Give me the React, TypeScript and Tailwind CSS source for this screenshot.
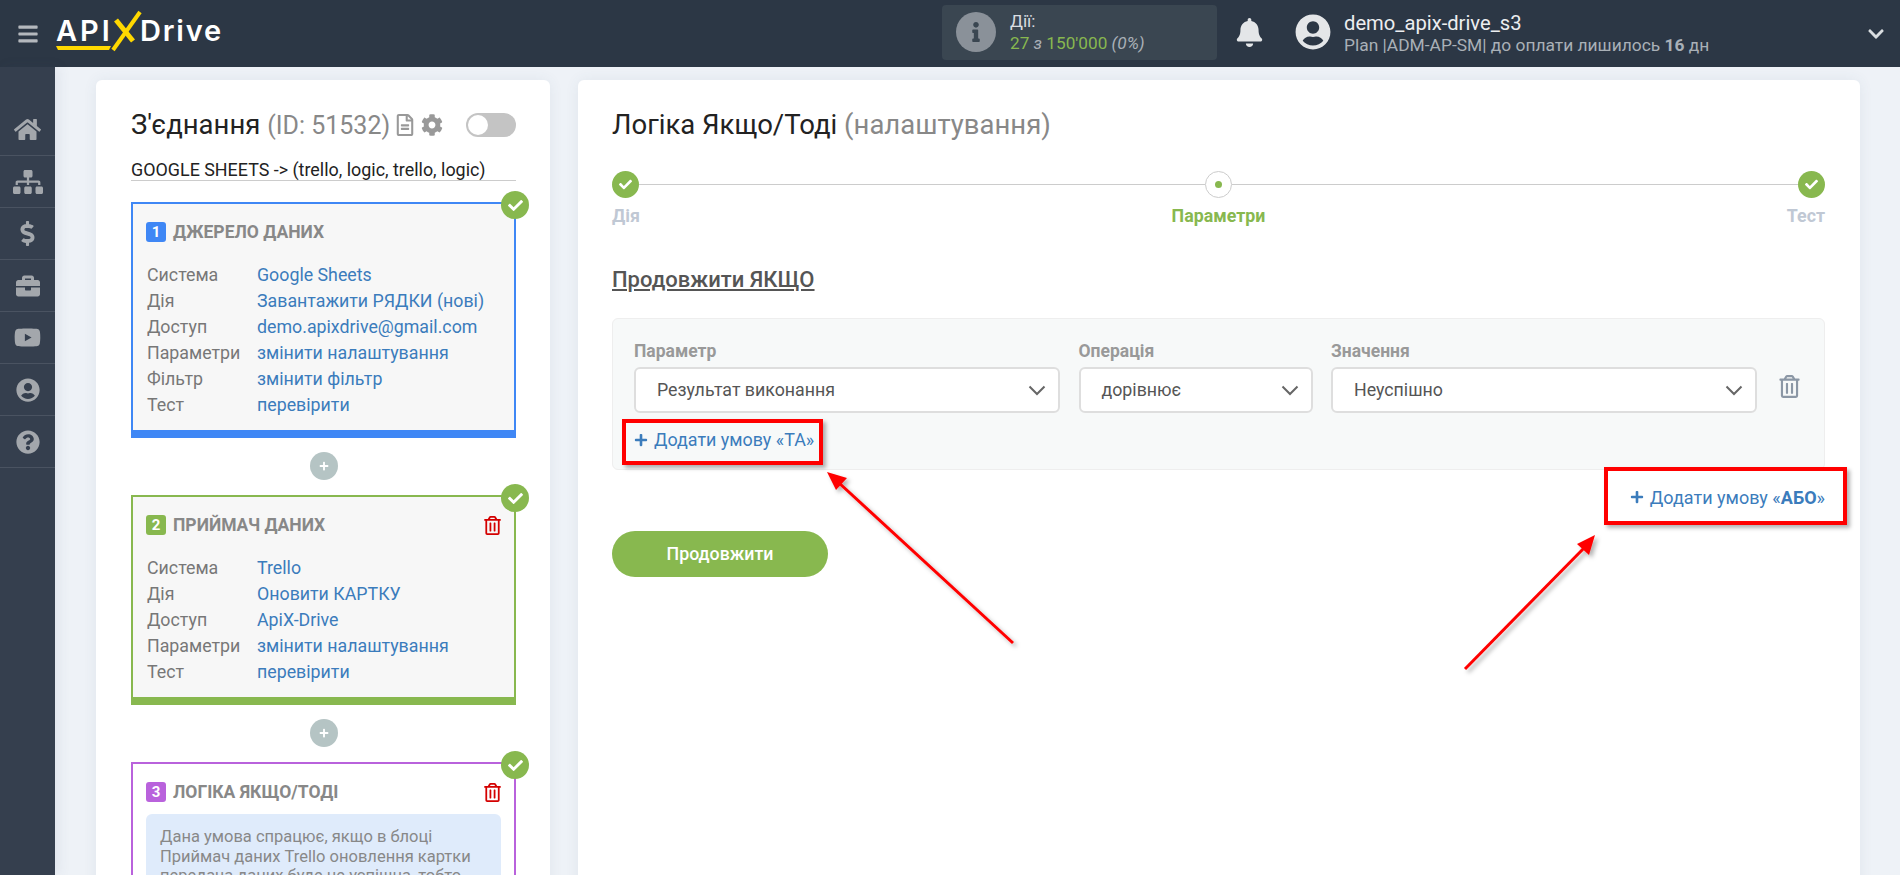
import {
  FaBars,
  FaBell,
  FaBriefcase,
  FaCheck,
  FaChevronDown,
  FaCog,
  FaDollarSign,
  FaHome,
  FaInfo,
  FaPlus,
  FaQuestionCircle,
  FaRegFileAlt,
  FaRegTrashAlt,
  FaSitemap,
  FaUserCircle,
  FaYoutube,
} from "react-icons/fa";

const navIcons = [
  { icon: FaHome, size: 27 },
  { icon: FaSitemap, size: 30 },
  { icon: FaDollarSign, size: 25 },
  { icon: FaBriefcase, size: 24 },
  { icon: FaYoutube, size: 27 },
  { icon: FaUserCircle, size: 24 },
  { icon: FaQuestionCircle, size: 24 },
];

function Check() {
  return (
    <span className="absolute right-[-15px] top-[-13px] flex h-[28px] w-[28px] items-center justify-center rounded-full bg-[#88b84f] text-white">
      <FaCheck size={15} />
    </span>
  );
}

function AddStep() {
  return (
    <div className="flex justify-center pb-[15px] pt-[14px]">
      <span className="flex h-[28px] w-[28px] items-center justify-center rounded-full bg-[#b5c4c4] text-white">
        <FaPlus size={10} />
      </span>
    </div>
  );
}

function Block({
  num,
  title,
  borderClass,
  badgeClass,
  rows,
  canDelete,
}: {
  num: number;
  title: string;
  borderClass: string;
  badgeClass: string;
  rows: [string, string][];
  canDelete?: boolean;
}) {
  return (
    <div className={`relative border-2 border-b-8 bg-[#f7f7f7] px-[13px] pb-[12px] pt-[18px] ${borderClass}`}>
      <Check />
      <BlockTitle num={num} title={title} badgeClass={badgeClass} canDelete={canDelete} />
      <div className="mt-[20px]">
        {rows.map(([label, value]) => (
          <div key={label} className="flex h-[26px] items-center text-[17.8px]">
            <span className="w-[111px] pl-px text-[#777]">{label}</span>
            <span className="text-[#3b7cbc]">{value}</span>
          </div>
        ))}
      </div>
    </div>
  );
}

function BlockTitle({
  num,
  title,
  badgeClass,
  canDelete,
}: {
  num: number;
  title: string;
  badgeClass: string;
  canDelete?: boolean;
}) {
  return (
    <div className="flex h-[20px] items-center">
      <span className={`flex h-[20px] w-[20px] items-center justify-center rounded-[3px] text-[15px] font-bold text-white ${badgeClass}`}>
        {num}
      </span>
      <span className="ml-[7px] text-[17.5px] font-bold text-[#888]">{title}</span>
      {canDelete && <FaRegTrashAlt size={19} className="ml-auto mr-[-1px] text-[#d40000]" />}
    </div>
  );
}

function StepCircle() {
  return (
    <span className="flex h-[27px] w-[27px] shrink-0 items-center justify-center rounded-full bg-[#88b84f] text-white">
      <FaCheck size={13} />
    </span>
  );
}

function SelectBox({ value }: { value: string }) {
  return (
    <div className="flex h-[46px] items-center justify-between rounded-[6px] border-2 border-[#dedede] bg-white pl-[21px] pr-[12px] text-[17.8px] font-normal text-[#555]">
      <span>{value}</span>
      <svg width="18" height="11" viewBox="0 0 18 11" fill="none" stroke="#666" strokeWidth="2">
        <path d="M1.5 1.5 9 9l7.5-7.5" />
      </svg>
    </div>
  );
}

function Arrow({ d, head }: { d: string; head: string }) {
  return (
    <svg className="absolute left-0 top-0" width="1900" height="875" fill="none">
      <defs>
        <filter id="arrowShadow" x="-20%" y="-20%" width="140%" height="140%">
          <feDropShadow dx="3" dy="3" stdDeviation="2" floodColor="#000" floodOpacity="0.3" />
        </filter>
      </defs>
      <g filter="url(#arrowShadow)">
        <path d={d} stroke="#ff0000" strokeWidth="3" />
        <path d={head} fill="#ff0000" />
      </g>
    </svg>
  );
}

export default function App() {
  return (
    <div className="relative flex h-screen flex-col overflow-hidden bg-[#eef2f7] font-['Roboto',sans-serif]">
      {/* Header */}
      <header className="flex h-[67px] shrink-0 items-center bg-[#2c3745]">
        <FaBars size={22} className="ml-[17px] text-[#b4b8bd]" />
        <div className="relative ml-[16px] h-[67px] w-[170px] font-['Inter',sans-serif] text-[29px] font-semibold leading-none text-white">
          <span className="absolute left-px top-[16px] tracking-[3px]">API</span>
          <span className="absolute left-[85px] top-[16px] tracking-[1.8px]">Drive</span>
          <svg className="absolute left-0 top-0" width="170" height="67" fill="none" stroke="#ffd800">
            <path d="M1 46h55l-2 4H3Z" fill="#ffd800" stroke="none" />
            <path d="M58 50 85 12" strokeWidth="4" />
            <path d="M61 20 78 41" strokeWidth="5" />
          </svg>
        </div>

        <div className="ml-[717px] mt-[-3px] flex h-[55px] w-[275px] items-center rounded-[4px] bg-[#3a4651]">
          <span className="ml-[14px] flex h-[40px] w-[40px] items-center justify-center rounded-full bg-[#8a9199] text-[#3a4651]">
            <FaInfo size={20} />
          </span>
          <div className="ml-[14px] text-[17.2px] leading-[22px]">
            <p className="text-[#d9dde0]">Дії:</p>
            <p className="text-[#88b84f]">
              27 <i className="text-[#a9b0b7]">з</i> 150'000 <i className="text-[#a9b0b7]">(0%)</i>
            </p>
          </div>
        </div>

        <FaBell size={29} className="ml-[18px] mt-[-3px] text-[#e4e6e8]" />
        <FaUserCircle size={36} className="ml-[31px] mt-[-3px] text-[#e4e6e8]" />
        <div className="ml-[13px]">
          <p className="text-[20.2px] leading-[23px] text-[#eceef0]">demo_apix-drive_s3</p>
          <p className="text-[17.4px] leading-[21px] text-[#a9b0b7]">
            Plan |ADM-AP-SM| до оплати лишилось <b>16</b> дн
          </p>
        </div>
        <FaChevronDown size={18} className="ml-auto mr-[15px] text-[#d9dde0]" />
      </header>

      <div className="flex min-h-0 flex-1">
        {/* Sidebar */}
        <nav className="w-[55px] shrink-0 bg-[#353f4e] pt-[37px] shadow-[4px_0_12px_rgba(60,80,110,0.08)]">
          {navIcons.map(({ icon: Icon, size }, i) => (
            <div key={i} className="flex h-[52px] items-center justify-center border-b border-[#4a5361] text-[#a3a7ac]">
              <Icon size={size} />
            </div>
          ))}
        </nav>

        {/* Content */}
        <main className="flex min-w-0 flex-1 items-start gap-[28px] pl-[41px] pt-[13px]">
          <section className="w-[454px] shrink-0 rounded-[6px] bg-white pl-[35px] pr-[34px] pt-[28px] shadow-[0_0_14px_rgba(70,90,120,0.08)]">
            <div className="flex h-[34px] items-center">
              <h1 className="text-[27.5px] text-[#222]">
                З'єднання <span className="text-[25px] text-[#888]">(ID: 51532)</span>
              </h1>
              <FaRegFileAlt size={22} className="ml-[4px] text-[#999]" />
              <FaCog size={22} className="ml-[5px] text-[#999]" />
              <span className="ml-auto flex h-[24px] w-[50px] items-center rounded-full bg-[#c4c4c4] pl-[2px]">
                <span className="h-[20px] w-[20px] rounded-full bg-white" />
              </span>
            </div>
            <p className="mt-[16px] h-[23px] border-b border-[#ccc] text-[17.9px] leading-[23px] text-[#222]">
              GOOGLE SHEETS -&gt; (trello, logic, trello, logic)
            </p>

            <div className="mt-[21px]">
              <Block
                num={1}
                title="ДЖЕРЕЛО ДАНИХ"
                borderClass="border-[#3f87f5]"
                badgeClass="bg-[#3f87f5]"
                rows={[
                  ["Система", "Google Sheets"],
                  ["Дія", "Завантажити РЯДКИ (нові)"],
                  ["Доступ", "demo.apixdrive@gmail.com"],
                  ["Параметри", "змінити налаштування"],
                  ["Фільтр", "змінити фільтр"],
                  ["Тест", "перевірити"],
                ]}
              />
              <AddStep />
              <Block
                num={2}
                title="ПРИЙМАЧ ДАНИХ"
                borderClass="border-[#88b84f]"
                badgeClass="bg-[#88b84f]"
                canDelete
                rows={[
                  ["Система", "Trello"],
                  ["Дія", "Оновити КАРТКУ"],
                  ["Доступ", "ApiX-Drive"],
                  ["Параметри", "змінити налаштування"],
                  ["Тест", "перевірити"],
                ]}
              />
              <AddStep />
              <div className="relative border-2 border-[#b962dc] bg-white px-[13px] pb-[13px] pt-[18px]">
                <Check />
                <BlockTitle num={3} title="ЛОГІКА ЯКЩО/ТОДІ" badgeClass="bg-[#b962dc]" canDelete />
                <div className="mt-[12px] rounded-[6px] bg-[#dfebfb] px-[14px] pb-[14px] pt-[13px] text-[16.5px] leading-[19.5px] text-[#888]">
                  Дана умова спрацює, якщо в блоці Приймач даних Trello оновлення картки передача даних буде не успішна, тобто
                </div>
              </div>
            </div>
          </section>

          <section className="h-[900px] w-[1282px] shrink-0 rounded-[6px] bg-white pl-[34px] pr-[35px] pt-[28px] shadow-[0_0_14px_rgba(70,90,120,0.08)]">
            <h2 className="h-[34px] text-[27.5px] leading-[34px] text-[#222]">
              Логіка Якщо/Тоді <span className="text-[#888]">(налаштування)</span>
            </h2>

            <div className="mt-[29px] flex items-center">
              <StepCircle />
              <span className="h-px flex-1 bg-[#ccc]" />
              <span className="flex h-[27px] w-[27px] shrink-0 items-center justify-center rounded-full border border-[#ccc] bg-white">
                <span className="h-[7px] w-[7px] rounded-full bg-[#88b84f]" />
              </span>
              <span className="h-px flex-1 bg-[#ccc]" />
              <StepCircle />
            </div>
            <div className="mt-[8px] grid grid-cols-3 text-[17.8px] font-bold leading-[20px]">
              <span className="text-[#c0c8d4]">Дія</span>
              <span className="text-center text-[#88b84f]">Параметри</span>
              <span className="text-right text-[#c0c8d4]">Тест</span>
            </div>

            <h3 className="mt-[41px] text-[22px] font-medium leading-[26px] text-[#555] underline">Продовжити ЯКЩО</h3>

            <div className="mt-[25px] rounded-[6px] border border-[#eeeeee] bg-[#f7f9f9] px-[21px] pb-[17px] pt-[22px]">
              <div className="flex">
                <div className="grid grid-cols-[426px_234px_426px] gap-x-[18.5px] text-[17.5px] font-bold leading-[20px] text-[#999]">
                  <span>Параметр</span>
                  <span>Операція</span>
                  <span>Значення</span>
                  <div className="mt-[6px]">
                    <SelectBox value="Результат виконання" />
                  </div>
                  <div className="mt-[6px]">
                    <SelectBox value="дорівнює" />
                  </div>
                  <div className="mt-[6px]">
                    <SelectBox value="Неуспішно" />
                  </div>
                </div>
                <FaRegTrashAlt size={23} className="ml-[21px] mt-[34px] text-[#8b97a5]" />
              </div>
              <div className="mt-[15px] flex h-[24px] items-center gap-[6px] text-[17.9px] text-[#3b7cbc]">
                <FaPlus size={14} />
                <span>Додати умову «ТА»</span>
              </div>
            </div>

            <div className="mt-[15px] flex h-[24px] items-center justify-end gap-[6px] text-[18px] text-[#3b7cbc]">
              <FaPlus size={14} />
              <span>
                Додати умову «<b>АБО</b>»
              </span>
            </div>

            <button className="mt-[22px] h-[46px] w-[216px] rounded-full bg-[#88b84f] text-[17.8px] font-medium text-white">
              Продовжити
            </button>
          </section>
        </main>
      </div>

      {/* Red annotations over the page */}
      <div className="absolute left-[622px] top-[419px] h-[46px] w-[201px] border-[4px] border-[#ff0000] shadow-[3px_3px_4px_rgba(0,0,0,0.3)]" />
      <div className="absolute left-[1604px] top-[467px] h-[58px] w-[243px] border-[4px] border-[#ff0000] shadow-[3px_3px_4px_rgba(0,0,0,0.3)]" />
      <Arrow d="M1013 643 838 482" head="M827 472 847 478 836 490Z" />
      <Arrow d="M1465 669 1587 545" head="M1595 535 1589 555 1577 544Z" />
    </div>
  );
}
